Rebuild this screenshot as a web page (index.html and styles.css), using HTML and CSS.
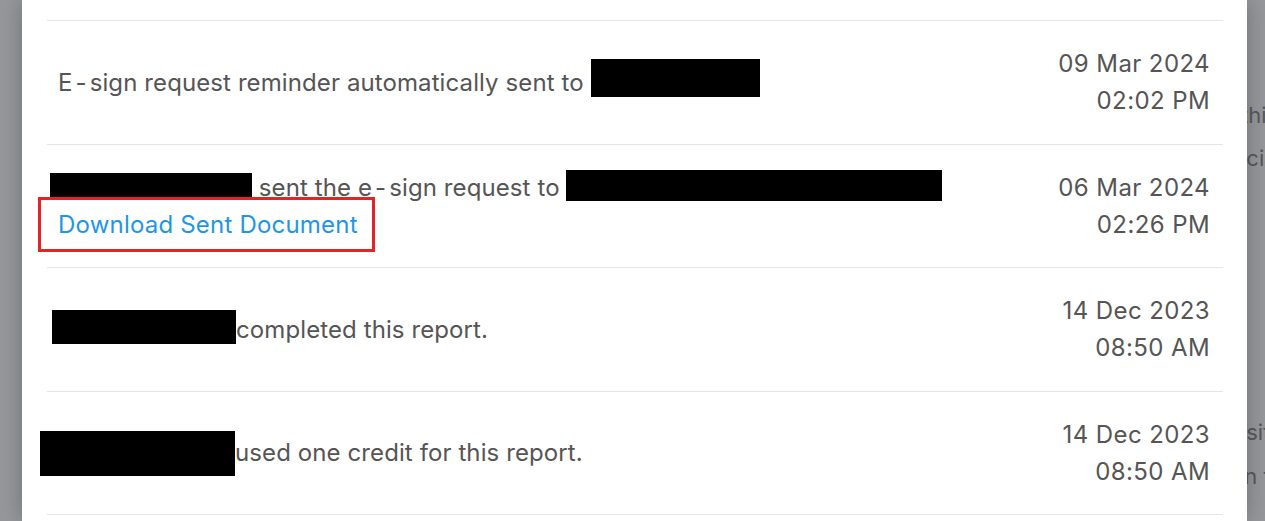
FILE: index.html
```html
<!DOCTYPE html>
<html lang="en">
<head>
<meta charset="utf-8">
<title>Activity log</title>
<link rel="stylesheet" href="styles.css">
</head>
<body>
<div class="page">
  <div class="modal">
    <ul class="log">
      <li class="row">
        <div class="msg">
          <p class="line">E<span class="dash">-</span>sign request reminder automatically sent to <span class="redact r1"></span></p>
        </div>
        <div class="when">09 Mar 2024<br>02:02 PM</div>
      </li>
      <li class="row">
        <div class="msg">
          <p class="line"><span class="redact r2a"></span> sent the e<span class="dash">-</span>sign request to <span class="redact r2b"></span></p>
          <p class="line"><span class="mark"><a class="link" href="#">Download Sent Document</a></span></p>
        </div>
        <div class="when">06 Mar 2024<br>02:26 PM</div>
      </li>
      <li class="row">
        <div class="msg">
          <p class="line"><span class="redact r3"></span>completed this report.</p>
        </div>
        <div class="when">14 Dec 2023<br>08:50 AM</div>
      </li>
      <li class="row">
        <div class="msg">
          <p class="line"><span class="redact r4"></span>used one credit for this report.</p>
        </div>
        <div class="when">14 Dec 2023<br>08:50 AM</div>
      </li>
    </ul>
  </div>
  <div class="behind">
    <p class="ghost g1">this</p>
    <p class="ghost g2">icial</p>
    <p class="ghost g3">osit</p>
    <p class="ghost g4">on t</p>
  </div>
</div>
</body>
</html>
```
FILE: styles.css
```css
* { box-sizing: border-box; }
html, body { margin: 0; padding: 0; }
body {
  background: #97989c;
  font-family: Inter, "Noto Sans", sans-serif;
  overflow: hidden;
  height: 521px;
}
.page {
  display: flex;
  height: 521px;
}
.modal {
  position: relative;
  z-index: 2;
  flex: 0 0 1225px;
  margin-left: 22px;
  background: #fff;
  padding: 20px 24px 0 25px;
  box-shadow: 0 0 22px rgba(40, 40, 46, 0.35);
}
.log {
  list-style: none;
  margin: 0;
  padding: 0;
}
.row {
  display: flex;
  align-items: center;
  justify-content: space-between;
  height: 123.5px;
  border-top: 1px solid #e6e6e6;
  padding: 0 13px 0 11px;
}
.row:last-child { border-bottom: 1px solid #e6e6e6; height: 124.5px; }
.msg { flex: 1; }
.line {
  margin: 0;
  font-size: 24px;
  letter-spacing: 0.1px;
  line-height: 37px;
  color: #555555;
  white-space: nowrap;
}
.dash {
  margin: 0 3px;
}
.when {
  text-align: right;
  font-size: 24px;
  letter-spacing: 0.4px;
  line-height: 37px;
  color: #555555;
}
.redact {
  display: inline-block;
  background: #000;
  vertical-align: baseline;
}
.r1 { width: 169px; height: 38px; margin: -22px 0 -6px 0; }
.r2a { width: 202px; height: 24px; margin: -13px 0 -1px -8px; }
.r2b { width: 376px; height: 31px; margin: -16px 0 -5px 0; }
.r3 { width: 184px; height: 34px; margin: -18px 0 -6px -6px; }
.r4 { width: 195px; height: 45px; margin: -20px 0 -15px -18px; }
.mark {
  position: relative;
  display: inline-block;
}
.mark::after {
  content: "";
  position: absolute;
  left: -20px;
  right: -17px;
  top: -9px;
  bottom: -9px;
  border: 3px solid #e32424;
  pointer-events: none;
}
.link {
  color: #1e96e8;
  letter-spacing: 0.2px;
  text-decoration: none;
}
.behind {
  flex: 1;
  overflow: hidden;
  position: relative;
  z-index: 1;
}
.ghost {
  margin: 0;
  font-size: 22px;
  color: #56575b;
  white-space: nowrap;
  position: absolute;
  line-height: 1;
}
.g1 { top: 104px; left: -6px; }
.g2 { top: 147px; left: -6px; }
.g3 { top: 421px; left: -14px; }
.g4 { top: 465px; left: -16px; }
```
